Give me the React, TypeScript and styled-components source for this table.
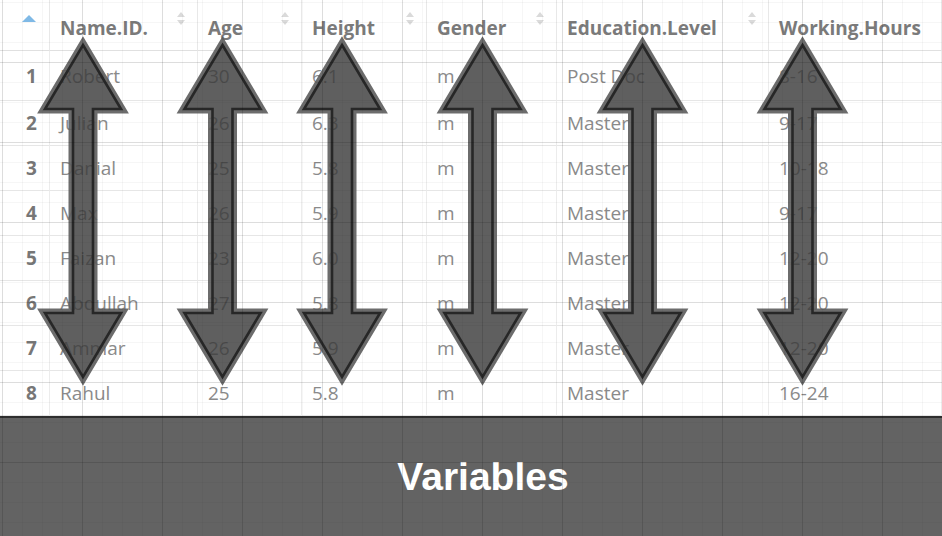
import React from 'react'
import styled, { createGlobalStyle } from 'styled-components'

const GlobalStyle = createGlobalStyle`
  html, body {
    margin: 0;
    padding: 0;
    background: #fff;
  }
  body {
    font-family: 'Open Sans', 'Noto Sans', sans-serif;
    overflow: hidden;
  }
`

const Stage = styled.main`
  position: relative;
  width: 942px;
  height: 536px;
  display: flex;
  flex-direction: column;
  overflow: hidden;
`

const TableArea = styled.section`
  position: relative;
  flex: none;
  height: 416px;
  background: #fff;
`

const Table = styled.div`
  display: grid;
  grid-template-columns: 50px 148px 104px 125px 130px 212px 1fr;
  grid-template-rows: 51px 50px repeat(7, 45px);
`

const HeadCell = styled.div<{ $index?: boolean }>`
  display: flex;
  align-items: center;
  justify-content: ${({ $index }) => ($index ? 'center' : 'space-between')};
  padding: ${({ $index }) => ($index ? '0 0 0 8px' : '5px 0 0 10px')};
  font-size: 19px;
  font-weight: 700;
  color: #7a7a7a;
  white-space: nowrap;
  border-right: 1px solid #e8e8e8;
  border-bottom: 1px solid #e0e0e0;
`

const Cell = styled.div<{ $index?: boolean }>`
  display: flex;
  align-items: center;
  justify-content: ${({ $index }) => ($index ? 'center' : 'flex-start')};
  padding: ${({ $index }) => ($index ? '0 0 0 14px' : '0 0 0 10px')};
  font-size: 19px;
  font-weight: ${({ $index }) => ($index ? 700 : 400)};
  color: ${({ $index }) => ($index ? '#777' : '#8a8a8a')};
  white-space: nowrap;
  border-right: 1px solid #ececec;
  border-bottom: 1px solid #e6e6e6;
`

const SortAsc = styled.span`
  align-self: flex-start;
  margin-top: 15px;
  width: 0;
  height: 0;
  border-left: 7px solid transparent;
  border-right: 7px solid transparent;
  border-bottom: 7px solid #7fb9e6;
`

const SortToggle = styled.span`
  align-self: flex-start;
  margin: 7px 12px 0 0;
  display: flex;
  flex-direction: column;
  gap: 3px;

  &::before,
  &::after {
    content: '';
    width: 0;
    height: 0;
    border-left: 4.5px solid transparent;
    border-right: 4.5px solid transparent;
  }
  &::before {
    border-bottom: 5px solid #dadada;
  }
  &::after {
    border-top: 5px solid #dadada;
  }
`

const ArrowLayer = styled.svg`
  position: absolute;
  inset: 0;
  width: 100%;
  height: 100%;
  pointer-events: none;
`

const GridOverlay = styled.div`
  position: absolute;
  inset: 0;
  pointer-events: none;
  background-image:
    linear-gradient(to right, rgba(0, 0, 0, 0.1) 1px, transparent 1px),
    linear-gradient(to bottom, rgba(0, 0, 0, 0.1) 1px, transparent 1px),
    linear-gradient(to right, rgba(0, 0, 0, 0.035) 1px, transparent 1px),
    linear-gradient(to bottom, rgba(0, 0, 0, 0.035) 1px, transparent 1px);
  background-size: 80px 80px, 80px 80px, 20px 20px, 20px 20px;
  background-position: 2px 62px, 2px 62px, 2px 2px, 2px 2px;
`

const Banner = styled.footer`
  flex: 1;
  display: flex;
  align-items: center;
  justify-content: center;
  background: #636363;
  border-top: 2px solid #2e2e2e;
`

const BannerTitle = styled.h2`
  margin: 0 0 0 24px;
  font-family: 'Liberation Sans', Arial, sans-serif;
  font-size: 39px;
  font-weight: 700;
  color: #fff;
`

const columns = ['Name.ID.', 'Age', 'Height', 'Gender', 'Education.Level', 'Working.Hours']

const rows = [
  ['Robert', '30', '6.1', 'm', 'Post Doc', '8-16'],
  ['Julian', '26', '6.3', 'm', 'Master', '9-17'],
  ['Danial', '25', '5.8', 'm', 'Master', '10-18'],
  ['Max', '26', '5.9', 'm', 'Master', '9-17'],
  ['Faizan', '23', '6.0', 'm', 'Master', '12-20'],
  ['Abdullah', '27', '5.8', 'm', 'Master', '12-20'],
  ['Ammar', '26', '5.9', 'm', 'Master', '12-20'],
  ['Rahul', '25', '5.8', 'm', 'Master', '16-24'],
]

// arrow centres, one per variable column
const arrowCentres = [83, 222.5, 342, 482.5, 642.5, 802.5]

const arrowPath = (c: number) =>
  `M${c} 45 L${c + 38} 109 L${c + 10} 109 L${c + 10} 313 L${c + 38} 313 ` +
  `L${c} 377 L${c - 38} 313 L${c - 10} 313 L${c - 10} 109 L${c - 38} 109 Z`

const Arrows: React.FC = () => (
  <ArrowLayer viewBox="0 0 942 416">
    <defs>
      {arrowCentres.map((c, i) => (
        <mask id={`outside-${i}`} key={c} maskUnits="userSpaceOnUse" x="0" y="0" width="942" height="416">
          <rect x="0" y="0" width="942" height="416" fill="#fff" />
          <path d={arrowPath(c)} fill="#000" />
        </mask>
      ))}
    </defs>
    {arrowCentres.map((c, i) => (
      <g key={c}>
        <path
          d={arrowPath(c)}
          fill="none"
          stroke="rgba(92, 92, 92, 0.9)"
          strokeWidth={9}
          strokeLinejoin="miter"
          mask={`url(#outside-${i})`}
        />
        <path d={arrowPath(c)} fill="rgba(60, 60, 60, 0.82)" stroke="#272727" strokeWidth={2.6} />
      </g>
    ))}
  </ArrowLayer>
)

const App: React.FC = () => (
  <>
    <GlobalStyle />
    <Stage>
      <TableArea>
        <Table>
          <HeadCell $index>
            <SortAsc />
          </HeadCell>
          {columns.map((name, i) => (
            <HeadCell key={name}>
              {name}
              {i < columns.length - 1 && <SortToggle />}
            </HeadCell>
          ))}
          {rows.map((row, r) => (
            <React.Fragment key={row[0]}>
              <Cell $index>{r + 1}</Cell>
              {row.map((value, c) => (
                <Cell key={c}>{value}</Cell>
              ))}
            </React.Fragment>
          ))}
        </Table>
        <Arrows />
      </TableArea>
      <Banner>
        <BannerTitle>Variables</BannerTitle>
      </Banner>
      <GridOverlay />
    </Stage>
  </>
)

export default App
